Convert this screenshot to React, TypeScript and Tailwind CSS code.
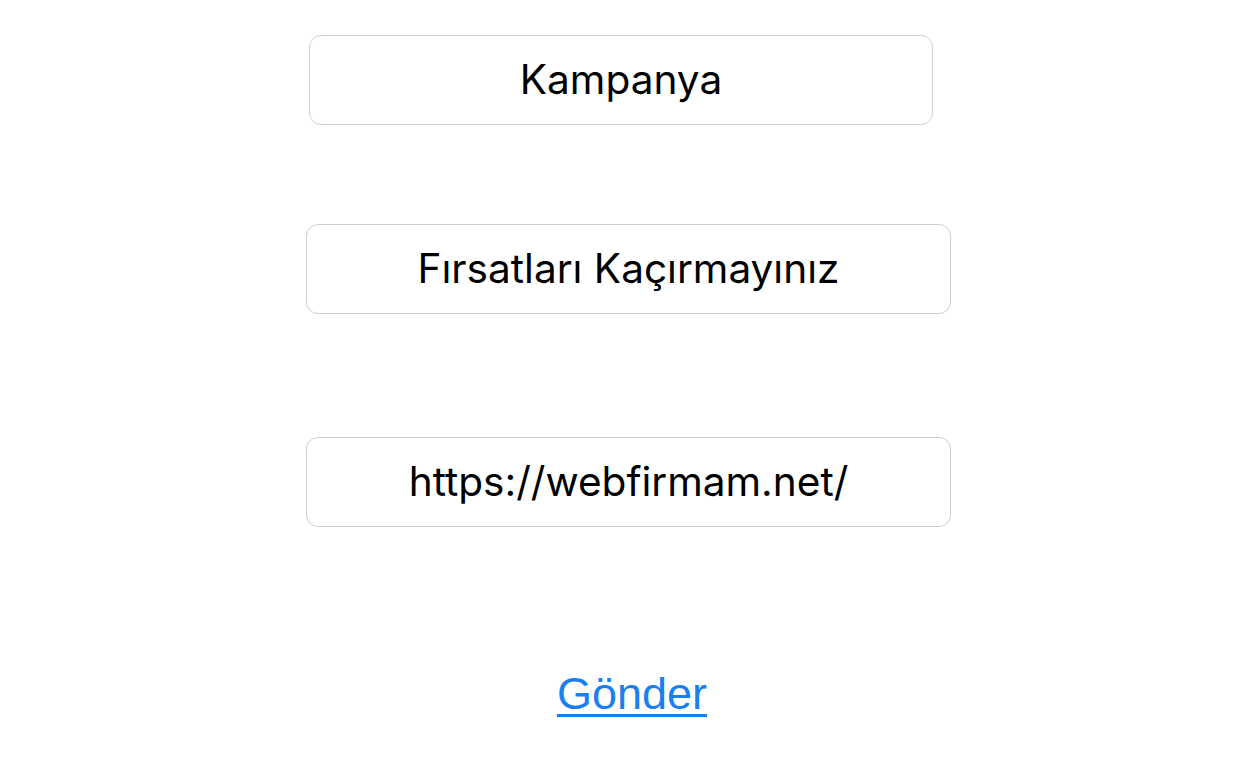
export default function App() {
  const box =
    "flex items-center justify-center h-[90px] rounded-[12px] border border-[#cfcfcf] bg-white text-black text-[40.6px] leading-none";
  return (
    <div className="w-[1242px] h-[763px] bg-white flex flex-col" style={{ fontFamily: "Inter, 'Noto Sans', sans-serif" }}>
      <div className="flex pt-[35px] pl-[309px]">
        <div className={box + " w-[624px]"}>Kampanya</div>
      </div>
      <div className="flex pt-[99px] pl-[306px]">
        <div className={box + " w-[645px]"}>Fırsatları Kaçırmayınız</div>
      </div>
      <div className="flex pt-[123px] pl-[306px]">
        <div className={box + " w-[645px]"}>https://webfirmam.net/</div>
      </div>
      <div className="flex justify-center pl-[22px] pt-[144px]">
        <a
          href="#"
          className="text-[#1a7ff0] text-[45px] leading-none underline decoration-[3px] underline-offset-[5px]"
          style={{ fontFamily: "'Liberation Sans', Arial, sans-serif" }}
        >
          Gönder
        </a>
      </div>
    </div>
  );
}
